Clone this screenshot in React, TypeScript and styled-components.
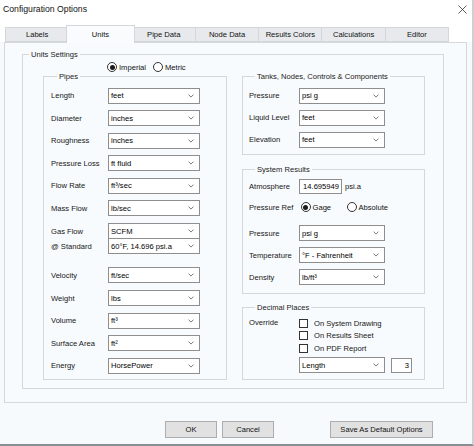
import React from "react";
import styled, { createGlobalStyle } from "styled-components";

const Global = createGlobalStyle`
  html, body { margin: 0; padding: 0; background: #ffffff; }
  body { font-family: "Liberation Sans", Arial, sans-serif; }
  * { box-sizing: border-box; }
`;

const Window = styled.div`
  width: 474px;
  height: 446px;
  display: flex;
  flex-direction: column;
  background: #f7fafc;
  border-right: 2px solid #cdd1d5;
  border-bottom: 2px solid #8a8d91;
  font-size: 7.6px;
  color: #111;
  overflow: hidden;
`;

const TitleBar = styled.div`
  height: 27px;
  flex: none;
  display: flex;
  justify-content: space-between;
  align-items: flex-start;
  padding: 4px 5px 0 3px;
  background: #ffffff;
`;

const Title = styled.span`
  font-size: 8.7px;
  line-height: 10px;
  color: #111;
`;

const CloseIcon = styled.svg`
  width: 9px;
  height: 9px;
  margin-top: 1px;
`;

const TabStrip = styled.div`
  flex: none;
  display: flex;
  align-items: flex-end;
  height: 15px;
  padding-left: 6px;
  background: #ffffff;
`;

const Tab = styled.div<{ $active?: boolean }>`
  flex: none;
  position: relative;
  z-index: ${(p) => (p.$active ? 2 : 1)};
  width: ${(p) => (p.$active ? 68.3 : 64.3)}px;
  height: ${(p) => (p.$active ? 18 : 15)}px;
  margin: 0 ${(p) => (p.$active ? -2 : 0)}px ${(p) => (p.$active ? -1 : 0)}px
    ${(p) => (p.$active ? -3 : -1)}px;
  display: flex;
  align-items: center;
  justify-content: center;
  background: ${(p) => (p.$active ? "#f9fbfd" : "#e7e9ec")};
  border: 1px solid #d4d7da;
  border-bottom: ${(p) => (p.$active ? "none" : "1px solid #d4d7da")};
  color: #111;
`;

const Panel = styled.div`
  flex: none;
  height: 361px;
  margin: 0 5px 0 4px;
  border: 1px solid #d6d9dc;
  background: #f8fbfd;
  padding: 7px 22px 0 17px;
`;

const Group = styled.fieldset<{ $pt?: number; $pl?: number; $pb?: number }>`
  margin: 0;
  min-width: 0;
  border: 1px solid #d5d8db;
  padding: ${(p) => p.$pt ?? 0}px 0 ${(p) => p.$pb ?? 0}px ${(p) => p.$pl ?? 0}px;
`;

const Legend = styled.legend`
  margin-left: 6px;
  padding: 0 2px;
  font-size: 7.6px;
  line-height: 9px;
  color: #222;
`;

const RadioRow = styled.div<{ $pl: number; $mt?: number }>`
  display: flex;
  align-items: center;
  height: 10px;
  margin-top: ${(p) => p.$mt ?? 0}px;
  padding-left: ${(p) => p.$pl}px;
`;

const RadioOption = styled.label<{ $w: number }>`
  display: flex;
  align-items: center;
  width: ${(p) => p.$w}px;
  gap: 2px;
`;

const RadioCircle = styled.span<{ $on?: boolean }>`
  flex: none;
  width: 10px;
  height: 10px;
  border-radius: 50%;
  border: 1px solid #333;
  background: #fff;
  display: flex;
  align-items: center;
  justify-content: center;
  &::after {
    content: "";
    width: 5px;
    height: 5px;
    border-radius: 50%;
    background: ${(p) => (p.$on ? "#1a1a1a" : "transparent")};
  }
`;

const Columns = styled.div`
  display: grid;
  grid-template-columns: 184px 183px;
  column-gap: 15px;
  padding: 0 18px 8px 20px;
`;

const Stack = styled.div<{ $gap: number }>`
  display: flex;
  flex-direction: column;
  gap: ${(p) => p.$gap}px;
`;

const RightColumn = styled.div`
  display: flex;
  flex-direction: column;
`;

const Spacer = styled.div<{ $h: number }>`
  flex: none;
  height: ${(p) => p.$h}px;
`;

const Row = styled.div<{ $h?: number; $mt?: number }>`
  display: flex;
  align-items: center;
  height: ${(p) => p.$h ?? 16}px;
  margin-top: ${(p) => p.$mt ?? 0}px;
`;

const FieldLabel = styled.span<{ $w: number }>`
  flex: none;
  width: ${(p) => p.$w}px;
  white-space: nowrap;
  color: #161616;
`;

const Combo = styled.div<{ $w: number }>`
  flex: none;
  width: ${(p) => p.$w}px;
  height: 16px;
  display: flex;
  align-items: center;
  justify-content: space-between;
  border: 1px solid #8e8e8e;
  background: #ffffff;
  padding: 0 5px 0 2px;
  color: #000;
  white-space: nowrap;
`;

const Chevron = styled.svg`
  width: 6px;
  height: 4px;
  flex: none;
`;

const NumBox = styled.div<{ $w: number }>`
  flex: none;
  width: ${(p) => p.$w}px;
  height: 15px;
  border: 1px solid #8e8e8e;
  background: #fff;
  display: flex;
  align-items: center;
  justify-content: flex-end;
  padding-right: 2px;
  color: #000;
`;

const Unit = styled.span`
  margin-left: 3px;
`;

const CheckList = styled.div`
  display: flex;
  flex-direction: column;
`;

const CheckRow = styled.label<{ $h: number }>`
  display: flex;
  align-items: center;
  height: ${(p) => p.$h}px;
  gap: 6px;
  color: #161616;
`;

const CheckBox = styled.span`
  flex: none;
  width: 9px;
  height: 9px;
  border: 1px solid #333;
  background: #fff;
`;

const OverrideRow = styled.div`
  display: flex;
  align-items: flex-start;
`;

const OverrideLabel = styled.span`
  flex: none;
  width: 50px;
  line-height: 12px;
  color: #161616;
`;

const InlineRow = styled.div`
  display: flex;
  align-items: center;
  gap: 6px;
  margin-top: 3px;
`;

const Footer = styled.div`
  flex: none;
  display: flex;
  padding: 18px 0 0 165px;
`;

const Button = styled.button<{ $w: number; $ml?: number }>`
  width: ${(p) => p.$w}px;
  height: 17px;
  margin-left: ${(p) => p.$ml ?? 0}px;
  padding: 0;
  background: #e1e1e1;
  border: 1px solid #adadad;
  font-family: "Liberation Sans", Arial, sans-serif;
  font-size: 7.6px;
  color: #111;
`;

const Chev = () => (
  <Chevron viewBox="0 0 6 4">
    <path d="M0.5 0.6 L3 3.1 L5.5 0.6" fill="none" stroke="#6a6a6a" strokeWidth="0.9" />
  </Chevron>
);

const Select = ({ w, value }: { w: number; value: string }) => (
  <Combo $w={w} role="combobox">
    <span>{value}</span>
    <Chev />
  </Combo>
);

const pipesTop: [string, string][] = [
  ["Length", "feet"],
  ["Diameter", "inches"],
  ["Roughness", "inches"],
  ["Pressure Loss", "ft fluid"],
  ["Flow Rate", "ft³/sec"],
  ["Mass Flow", "lb/sec"],
];

const pipesBottom: [string, string][] = [
  ["Velocity", "ft/sec"],
  ["Weight", "lbs"],
  ["Volume", "ft³"],
  ["Surface Area", "ft²"],
  ["Energy", "HorsePower"],
];

const checks: [string, number][] = [
  ["On System Drawing", 12],
  ["On Results Sheet", 13],
  ["On PDF Report", 12],
];

const tabs = ["Labels", "Units", "Pipe Data", "Node Data", "Results Colors", "Calculations", "Editor"];

export default function App() {
  return (
    <>
      <Global />
      <Window>
        <TitleBar>
          <Title>Configuration Options</Title>
          <CloseIcon viewBox="0 0 9 9">
            <path d="M0.5 0.5 L8.5 8.5 M8.5 0.5 L0.5 8.5" stroke="#333" strokeWidth="0.8" />
          </CloseIcon>
        </TitleBar>
        <TabStrip>
          {tabs.map((t) => (
            <Tab key={t} $active={t === "Units"}>
              {t}
            </Tab>
          ))}
        </TabStrip>
        <Panel>
          <Group>
            <Legend>Units Settings</Legend>
            <RadioRow $pl={84} $mt={3}>
              <RadioOption $w={46}>
                <RadioCircle $on />
                Imperial
              </RadioOption>
              <RadioOption $w={40}>
                <RadioCircle />
                Metric
              </RadioOption>
            </RadioRow>
            <Columns>
              <Group $pt={6.5} $pl={7} $pb={5}>
                <Legend>Pipes</Legend>
                <Stack $gap={6.6}>
                  {pipesTop.map(([l, v]) => (
                    <Row key={l}>
                      <FieldLabel $w={57}>{l}</FieldLabel>
                      <Select w={92} value={v} />
                    </Row>
                  ))}
                  <div>
                    <Row>
                      <FieldLabel $w={57}>Gas Flow</FieldLabel>
                      <Select w={92} value="SCFM" />
                    </Row>
                    <Row $mt={-1}>
                      <FieldLabel $w={57}>@ Standard</FieldLabel>
                      <Select w={92} value="60°F,  14.696 psi.a" />
                    </Row>
                  </div>
                  {pipesBottom.map(([l, v], i) => (
                    <Row key={l} $mt={i === 0 ? 6.8 : 0}>
                      <FieldLabel $w={57}>{l}</FieldLabel>
                      <Select w={92} value={v} />
                    </Row>
                  ))}
                </Stack>
              </Group>
              <RightColumn>
                <Group $pt={6.5} $pl={6} $pb={6}>
                  <Legend>Tanks, Nodes, Controls &amp; Components</Legend>
                  <Stack $gap={6}>
                    <Row>
                      <FieldLabel $w={50}>Pressure</FieldLabel>
                      <Select w={86} value="psi g" />
                    </Row>
                    <Row>
                      <FieldLabel $w={50}>Liquid Level</FieldLabel>
                      <Select w={86} value="feet" />
                    </Row>
                    <Row>
                      <FieldLabel $w={50}>Elevation</FieldLabel>
                      <Select w={86} value="feet" />
                    </Row>
                  </Stack>
                </Group>
                <Spacer $h={10.5} />
                <Group $pt={5} $pl={6} $pb={8}>
                  <Legend>System Results</Legend>
                  <Row $h={15}>
                    <FieldLabel $w={50}>Atmosphere</FieldLabel>
                    <NumBox $w={43}>14.695949</NumBox>
                    <Unit>psi.a</Unit>
                  </Row>
                  <Row $h={10} $mt={8}>
                    <FieldLabel $w={51.5}>Pressure Ref</FieldLabel>
                    <RadioOption $w={46}>
                      <RadioCircle $on />
                      Gage
                    </RadioOption>
                    <RadioOption $w={50}>
                      <RadioCircle />
                      Absolute
                    </RadioOption>
                  </Row>
                  <Row $mt={13}>
                    <FieldLabel $w={50}>Pressure</FieldLabel>
                    <Select w={86} value="psi g" />
                  </Row>
                  <Row $mt={6}>
                    <FieldLabel $w={50}>Temperature</FieldLabel>
                    <Select w={86} value="°F - Fahrenheit" />
                  </Row>
                  <Row $mt={6}>
                    <FieldLabel $w={50}>Density</FieldLabel>
                    <Select w={86} value="lb/ft³" />
                  </Row>
                </Group>
                <Spacer $h={8.5} />
                <Group $pt={5.5} $pl={6} $pb={6}>
                  <Legend>Decimal Places</Legend>
                  <OverrideRow>
                    <OverrideLabel>Override</OverrideLabel>
                    <CheckList>
                      {checks.map(([t, h]) => (
                        <CheckRow key={t} $h={h}>
                          <CheckBox />
                          {t}
                        </CheckRow>
                      ))}
                      <InlineRow>
                        <Select w={86} value="Length" />
                        <NumBox $w={21}>3</NumBox>
                      </InlineRow>
                    </CheckList>
                  </OverrideRow>
                </Group>
              </RightColumn>
            </Columns>
          </Group>
        </Panel>
        <Footer>
          <Button $w={52}>OK</Button>
          <Button $w={52} $ml={5}>Cancel</Button>
          <Button $w={103} $ml={56}>Save As Default Options</Button>
        </Footer>
      </Window>
    </>
  );
}
